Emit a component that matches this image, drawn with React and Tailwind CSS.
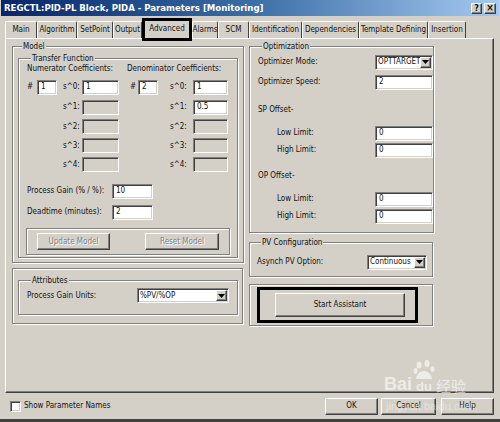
import React from 'react';

const FONT = "font-['Liberation_Sans_Narrow','DejaVu_Sans_Condensed','Liberation_Sans',sans-serif]";
const SUNKEN = 'border border-t-[#808080] border-l-[#808080] border-b-white border-r-white shadow-[inset_1px_1px_0_#404040,inset_-1px_-1px_0_#d4d0c8]';
const RAISED = 'border border-t-white border-l-white border-r-[#404040] border-b-[#404040] shadow-[inset_-1px_-1px_0_#808080]';
const ETCHED = 'border border-[#808080] shadow-[1px_1px_0_#fff,inset_1px_1px_0_#fff]';

function Field({ value = '', disabled = false, className = '' }) {
  return (
    <div className={`h-[15px] ${SUNKEN} ${disabled ? 'bg-[#d4d0c8]' : 'bg-white'} flex items-center pl-[3px] leading-none ${className}`}>
      {value}
    </div>
  );
}

function Select({ value, className = '' }) {
  return (
    <div className={`h-[15px] bg-white ${SUNKEN} flex items-stretch ${className}`}>
      <span className="flex-1 min-w-0 overflow-hidden flex items-center pl-[2px] leading-none">{value}</span>
      <span className={`w-[11px] my-[1px] mr-[1px] bg-[#d4d0c8] ${RAISED} flex items-center justify-center`}>
        <svg width="7" height="4" viewBox="0 0 7 4"><path d="M0 0h7L3.5 4z" fill="#000" /></svg>
      </span>
    </div>
  );
}

function Button({ children, disabled = false, className = '' }) {
  return (
    <div className={`bg-[#d4d0c8] ${RAISED} flex items-center justify-center leading-none ${disabled ? 'text-[#808080] [text-shadow:1px_1px_0_#fff]' : ''} ${className}`}>
      {children}
    </div>
  );
}

function Group({ label, className = '', children }) {
  return (
    <fieldset className={`${ETCHED} ${className}`}>
      {label && <legend className="ml-[4px] px-[1px] leading-[11px] bg-[#d4d0c8]">{label}</legend>}
      {children}
    </fieldset>
  );
}

const tabs = [
  ['Main', 'w-[32px]'],
  ['Algorithm', 'w-[40px]'],
  ['SetPoint', 'w-[36px]'],
  ['Output', 'w-[29px]'],
  ['Advanced', null],
  ['Alarms', 'w-[26px]'],
  ['SCM', 'w-[31px]'],
  ['Identification', 'w-[53px]'],
  ['Dependencies', 'w-[57px]'],
  ['Template Defining', 'w-[69px]'],
  ['Insertion', 'w-[38px]'],
];

function CoefRow({ h, k, num, den, numDisabled, denDisabled, first }) {
  return (
    <div className={`flex items-center ${h}`}>
      <span className="w-[10px]">{first ? '#' : ''}</span>
      {first ? <Field value="1" className="w-[20px]" /> : <span className="w-[20px]" />}
      <span className="w-[6px]" />
      <span className="w-[19px]">s^{k}:</span>
      <Field value={num} disabled={numDisabled} className="w-[37px]" />
      <span className="w-[11px]" />
      <span className="w-[8px]">{first ? '#' : ''}</span>
      {first ? <Field value="2" className="w-[20px]" /> : <span className="w-[20px]" />}
      <span className="w-[12px]" />
      <span className="w-[23px]">s^{k}:</span>
      <Field value={den} disabled={denDisabled} className="w-[35px]" />
    </div>
  );
}

function OptRow({ label, indent, children, className = '' }) {
  return (
    <div className={`h-[16px] flex items-center ${className}`}>
      <span className={`${indent ? 'pl-[19px]' : ''} w-[117px]`}>{label}</span>
      {children}
    </div>
  );
}

export default function App() {
  return (
    <div className={`relative w-[500px] h-[422px] overflow-hidden bg-[#d4d0c8] text-[8px] text-[#111] whitespace-nowrap ${FONT} flex flex-col border-b-[3px] border-[#404040]`}>
      {/* title bar */}
      <div className="h-[16px] mx-[1px] shrink-0 flex items-center justify-between pl-[3px] pr-[3px] bg-gradient-to-r from-[#0a246a] via-[#3a6ea5] to-[#a6caf0]">
        <span className="text-white font-bold text-[9.5px] leading-none">REGCTL:PID-PL Block, PIDA - Parameters [Monitoring]</span>
        <div className="flex gap-[2px]">
          <div className={`w-[11px] h-[11px] bg-[#d4d0c8] ${RAISED} flex items-center justify-center text-[9px] font-bold leading-none`}>?</div>
          <div className={`w-[12px] h-[11px] bg-[#d4d0c8] ${RAISED} flex items-center justify-center text-[10px] font-bold leading-none`}>×</div>
        </div>
      </div>

      {/* tabs */}
      <div className="h-[22px] shrink-0 flex items-end pl-[5px]">
        {tabs.map(([name, w]) =>
          w ? (
            <div key={name} className={`${w} h-[17px] border-t border-l border-r border-t-white border-l-white border-r-[#404040] rounded-t-[2px] flex items-center justify-center`}>
              {name}
            </div>
          ) : (
            <div key={name} className="relative z-10 w-[50px] h-[23px] -mb-[3px] border-[3px] border-black bg-[#d4d0c8] flex items-start justify-center pt-[4px] leading-none">
              {name}
            </div>
          )
        )}
      </div>

      {/* tab page */}
      <div className={`mx-[5px] w-[489px] h-[355px] shrink-0 bg-[#d4d0c8] ${RAISED} flex items-start pt-[2px] pl-[6px] gap-[6px]`}>
        {/* left column */}
        <div className="w-[231px] flex flex-col">
          <Group label="Model" className="h-[222px] px-[5px]">
            <Group label="Transfer Function" className="mt-[1px] w-[220px] h-[205px] pl-[8px]">
              <div className="h-[10px] leading-[10px] flex">
                <span className="w-[100px]">Numerator Coefficients:</span>
                <span>Denominator Coefficients:</span>
              </div>
              <div className="mt-[3px] flex flex-col">
                <CoefRow h="h-[20px]" k="0" num="1" den="1" first />
                <CoefRow h="h-[20px]" k="1" num="" den="0.5" numDisabled />
                <CoefRow h="h-[19px]" k="2" num="" den="" numDisabled denDisabled />
                <CoefRow h="h-[19px]" k="3" num="" den="" numDisabled denDisabled />
                <CoefRow h="h-[19px]" k="4" num="" den="" numDisabled denDisabled />
              </div>
              <div className="mt-[7px] h-[20px] flex items-center">
                <span className="w-[85px]">Process Gain (% / %):</span>
                <Field value="10" className="w-[41px]" />
              </div>
              <div className="mt-[1px] h-[20px] flex items-center">
                <span className="w-[85px]">Deadtime (minutes):</span>
                <Field value="2" className="w-[41px]" />
              </div>
              <div className={`mt-[6px] -ml-[1px] w-[204px] h-[27px] ${ETCHED} flex items-center justify-between px-[10px]`}>
                <Button disabled className="w-[73px] h-[17px]">Update Model</Button>
                <Button disabled className="w-[74px] h-[17px]">Reset Model</Button>
              </div>
            </Group>
          </Group>
          <div className={`mt-[5px] h-[56px] ${ETCHED} px-[5px]`}>
            <Group label="Attributes" className="mt-[6px] w-[220px] h-[40px] pl-[8px]">
              <div className="mt-[1px] h-[17px] flex items-center">
                <span className="w-[110px]">Process Gain Units:</span>
                <Select value="%PV/%OP" className="w-[92px]" />
              </div>
            </Group>
          </div>
        </div>

        {/* right column */}
        <div className="w-[184px] flex flex-col">
          <Group label="Optimization" className="h-[192px] pl-[8px]">
            <OptRow label="Optimizer Mode:" className="mt-[2px]">
              <Select value="OPTTARGET" className="w-[58px]" />
            </OptRow>
            <OptRow label="Optimizer Speed:" className="mt-[4px]">
              <Field value="2" className="w-[58px]" />
            </OptRow>
            <OptRow label="SP Offset-" className="mt-[12px]" />
            <OptRow label="Low Limit:" indent className="mt-[7px]">
              <Field value="0" className="w-[58px]" />
            </OptRow>
            <OptRow label="High Limit:" indent className="mt-[1px]">
              <Field value="0" className="w-[58px]" />
            </OptRow>
            <OptRow label="OP Offset-" className="mt-[10px]" />
            <OptRow label="Low Limit:" indent className="mt-[7px]">
              <Field value="0" className="w-[58px]" />
            </OptRow>
            <OptRow label="High Limit:" indent className="mt-[1px]">
              <Field value="0" className="w-[58px]" />
            </OptRow>
          </Group>
          <Group label="PV Configuration" className="mt-[4px] h-[40px] pl-[7px]">
            <div className="mt-[6px] h-[16px] flex items-center">
              <span className="w-[110px]">Asynch PV Option:</span>
              <Select value="Continuous" className="w-[60px]" />
            </div>
          </Group>
          <div className={`mt-[7px] h-[42px] ${ETCHED}`}>
            <div className="mt-[2px] ml-[7px] w-[161px] h-[36px] border-[3px] border-black flex items-center pl-[15px]">
              <Button className="w-[130px] h-[24px]">Start Assistant</Button>
            </div>
          </div>
        </div>
      </div>

      {/* bottom bar */}
      <div className="flex-1 flex items-center pl-[10px] pr-[6px]">
        <div className={`w-[11px] h-[11px] bg-white ${SUNKEN}`} />
        <span className="ml-[3px]">Show Parameter Names</span>
        <div className="ml-auto flex gap-[3px]">
          <Button className="w-[53px] h-[17px] border-black shadow-[inset_-1px_-1px_0_#404040,inset_1px_1px_0_#fff]">OK</Button>
          <Button className="w-[55px] h-[17px]">Cancel</Button>
          <Button className="ml-[2px] w-[53px] h-[17px]">Help</Button>
        </div>
      </div>

      {/* watermark */}
      <div className="absolute left-[384px] top-[360px] flex items-end gap-[1px] text-white/60 pointer-events-none font-['Liberation_Sans',sans-serif]">
        <span className="font-bold text-[18px] leading-none">Bai</span>
        <div className="flex flex-col items-center">
          <svg width="22" height="20" viewBox="0 0 22 20" className="opacity-60">
            <ellipse cx="6" cy="5" rx="2.5" ry="3.5" fill="#fff" />
            <ellipse cx="14" cy="3.5" rx="2.5" ry="3.5" fill="#fff" />
            <ellipse cx="19.5" cy="9" rx="2" ry="3" fill="#fff" />
            <ellipse cx="2.5" cy="11" rx="2" ry="3" fill="#fff" />
            <path d="M11 11c-5 0-8 5-8 8h16c0-3-3-8-8-8z" fill="#fff" />
          </svg>
          <span className="font-bold text-[13px] leading-none">du</span>
        </div>
        <span className="font-['Noto_Sans_CJK_SC',sans-serif] text-[15px] leading-none">经验</span>
      </div>
      <div className="absolute left-[386px] top-[401px] text-white/40 text-[11px] leading-none pointer-events-none font-['Liberation_Sans',sans-serif]">
        jingyan.baidu.com
      </div>
    </div>
  );
}
